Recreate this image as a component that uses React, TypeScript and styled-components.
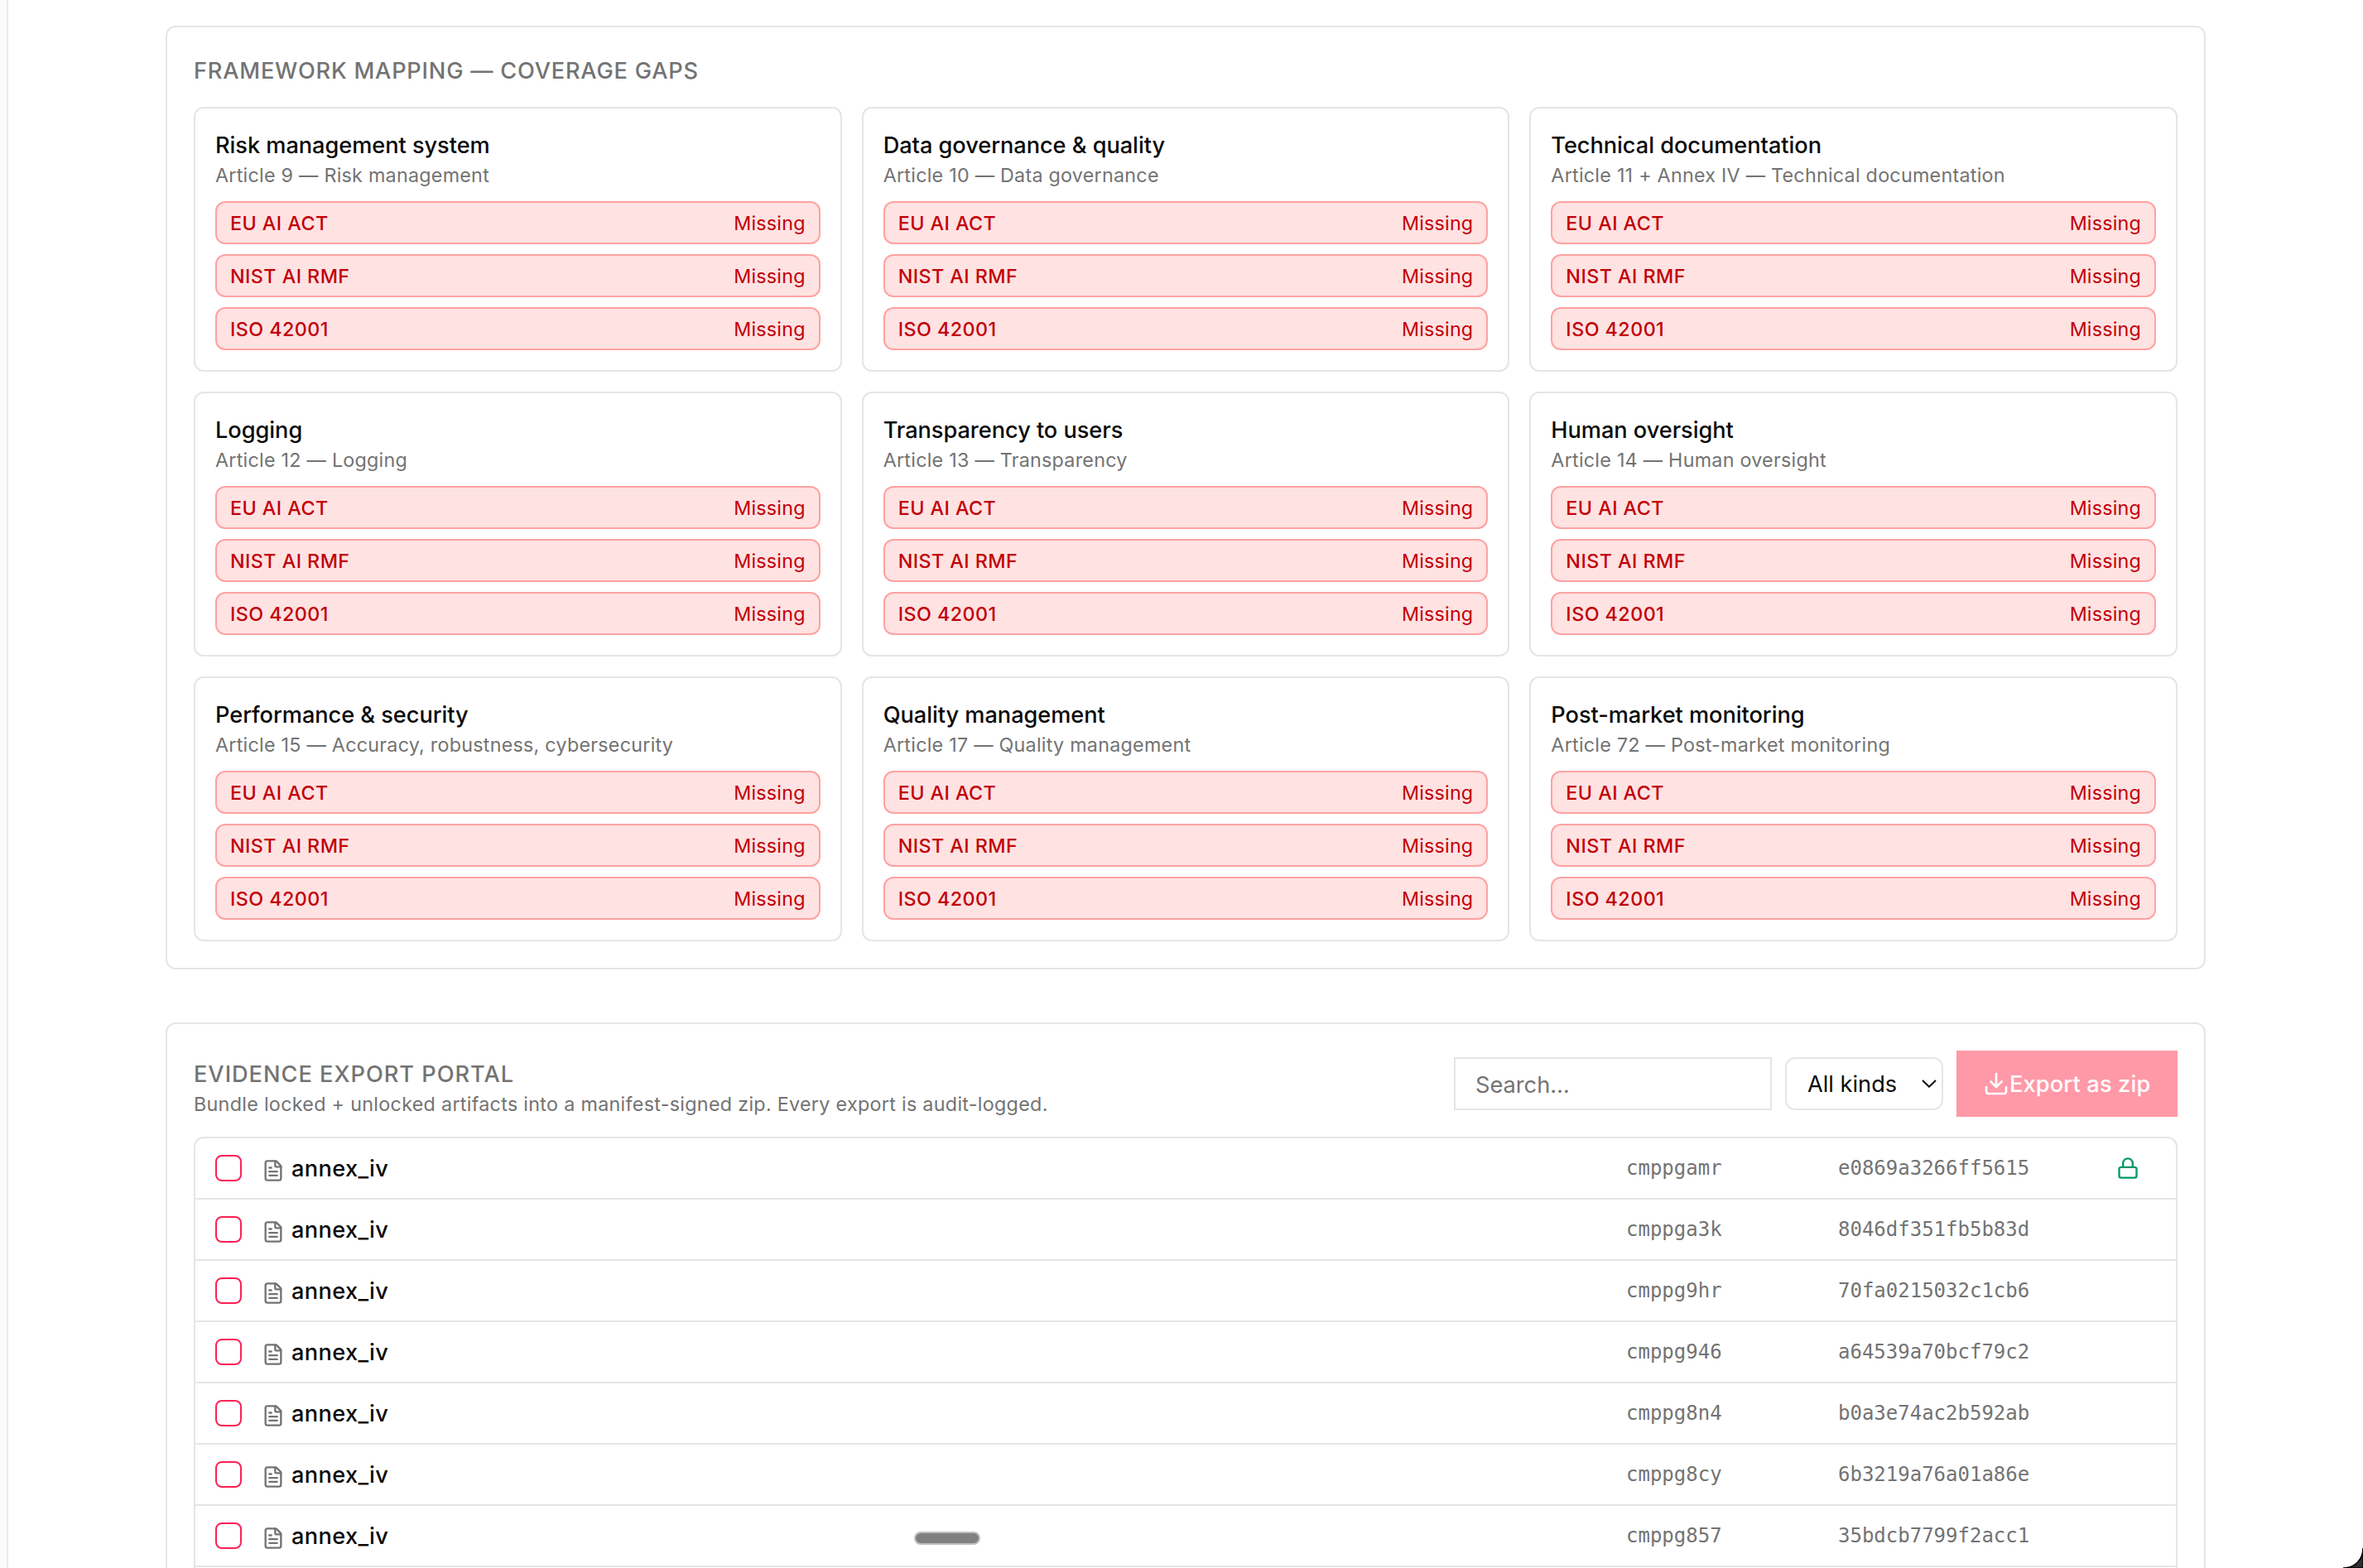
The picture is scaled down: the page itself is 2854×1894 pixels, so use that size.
import { Download, FileText, Lock } from 'lucide-react'
import styled, { createGlobalStyle } from 'styled-components'

interface Control {
  title: string
  article: string
}

interface Artifact {
  kind: string
  system: string
  hash: string
  locked?: boolean
}

const frameworks = ['EU AI ACT', 'NIST AI RMF', 'ISO 42001']

const controls: Control[] = [
  { title: 'Risk management system', article: 'Article 9 — Risk management' },
  { title: 'Data governance & quality', article: 'Article 10 — Data governance' },
  { title: 'Technical documentation', article: 'Article 11 + Annex IV — Technical documentation' },
  { title: 'Logging', article: 'Article 12 — Logging' },
  { title: 'Transparency to users', article: 'Article 13 — Transparency' },
  { title: 'Human oversight', article: 'Article 14 — Human oversight' },
  { title: 'Performance & security', article: 'Article 15 — Accuracy, robustness, cybersecurity' },
  { title: 'Quality management', article: 'Article 17 — Quality management' },
  { title: 'Post-market monitoring', article: 'Article 72 — Post-market monitoring' }
]

const artifacts: Artifact[] = [
  { kind: 'annex_iv', system: 'cmppgamr', hash: 'e0869a3266ff5615', locked: true },
  { kind: 'annex_iv', system: 'cmppga3k', hash: '8046df351fb5b83d' },
  { kind: 'annex_iv', system: 'cmppg9hr', hash: '70fa0215032c1cb6' },
  { kind: 'annex_iv', system: 'cmppg946', hash: 'a64539a70bcf79c2' },
  { kind: 'annex_iv', system: 'cmppg8n4', hash: 'b0a3e74ac2b592ab' },
  { kind: 'annex_iv', system: 'cmppg8cy', hash: '6b3219a76a01a86e' },
  { kind: 'annex_iv', system: 'cmppg857', hash: '35bdcb7799f2acc1' }
]

const App = () => (
  <>
    <GlobalStyle />
    <Page>
      <SidebarEdge />
      <Content>
        <Panel>
          <SectionTitle>Framework mapping — coverage gaps</SectionTitle>
          <ControlGrid>
            {controls.map(({ title, article }) => (
              <ControlCard key={title}>
                <ControlTitle>{title}</ControlTitle>
                <Caption>{article}</Caption>
                <StatusList>
                  {frameworks.map((framework) => (
                    <StatusPill key={framework}>
                      <Framework>{framework}</Framework>
                      <span>Missing</span>
                    </StatusPill>
                  ))}
                </StatusList>
              </ControlCard>
            ))}
          </ControlGrid>
        </Panel>

        <Panel>
          <PortalHeader>
            <div>
              <SectionTitle $flush>Evidence export portal</SectionTitle>
              <PortalCaption>
                Bundle locked + unlocked artifacts into a manifest-signed zip. Every export is audit-logged.
              </PortalCaption>
            </div>
            <Toolbar>
              <SearchInput placeholder="Search…" />
              <KindSelect>
                <span>All kinds</span>
                <Chevron viewBox="0 0 18 10">
                  <path d="M1 1 9 8.7 17 1" />
                </Chevron>
              </KindSelect>
              <ExportButton disabled>
                <Download size={32} />
                <span>Export as zip</span>
              </ExportButton>
            </Toolbar>
          </PortalHeader>
          <ArtifactTable>
            {artifacts.map(({ kind, system, hash, locked }) => (
              <ArtifactRow key={hash}>
                <Checkbox type="checkbox" />
                <Kind>
                  <FileText size={28} />
                  <span>{kind}</span>
                </Kind>
                <Mono>{system}</Mono>
                <Mono>{hash}</Mono>
                {locked && <LockIcon size={28} />}
              </ArtifactRow>
            ))}
          </ArtifactTable>
        </Panel>
      </Content>
      <DragHandle />
      <WindowCorner viewBox="0 0 24 24">
        <path d="M24 0V24H0C14 24 24 14 24 0Z" />
      </WindowCorner>
    </Page>
  </>
)

const GlobalStyle = createGlobalStyle`
  * {
    box-sizing: border-box;
  }

  body {
    margin: 0;
    background: #fff;
    color: #0a0a0a;
    font-family: Inter, 'Liberation Sans', sans-serif;
    font-size: 27.2px;
    line-height: 40px;
  }
`

const Page = styled.div`
  position: relative;
  display: flex;
  height: 1894px;
  overflow: hidden;
`

const SidebarEdge = styled.div`
  flex: 0 0 10px;
  background: #fafafa;
  border-right: 2px solid #ececec;
`

const Content = styled.main`
  flex: none;
  width: 2464px;
  margin: 31px 0 0 190px;
  display: flex;
  flex-direction: column;
  gap: 64px;
`

const Panel = styled.section`
  flex: none;
  padding: 32px;
  border: 2px solid #e5e5e5;
  border-radius: 12px;
`

const SectionTitle = styled.h2<{ $flush?: boolean }>`
  margin: 0 0 ${({ $flush }) => ($flush ? 0 : 24)}px;
  padding-top: 2px;
  color: #737373;
  font-size: 27.2px;
  font-weight: 500;
  line-height: 38px;
  letter-spacing: ${({ $flush }) => ($flush ? 0.98 : 0.79)}px;
  text-transform: uppercase;
`

const ControlGrid = styled.div`
  display: grid;
  grid-template-columns: repeat(3, 1fr);
  gap: 24px;
`

const ControlCard = styled.article`
  padding: 24px;
  border: 2px solid #e5e5e5;
  border-radius: 12px;
`

const ControlTitle = styled.h3`
  margin: 0;
  padding-top: 2px;
  font-size: 27.2px;
  font-weight: 500;
  line-height: 38px;
  letter-spacing: -0.05px;
`

const Caption = styled.p`
  margin: 0;
  padding-top: 2px;
  color: #737373;
  font-size: 23.3px;
  line-height: 30px;
  letter-spacing: 0.25px;
`

const PortalCaption = styled(Caption)`
  letter-spacing: 0.3px;
`

const StatusList = styled.div`
  display: flex;
  flex-direction: column;
  gap: 12px;
  margin-top: 16px;
`

const StatusPill = styled.div`
  display: flex;
  align-items: center;
  justify-content: space-between;
  height: 52px;
  padding: 2px 16px 0;
  border: 2px solid #ffa2a2;
  border-radius: 12px;
  background: #ffe2e2;
  color: #c10007;
  font-size: 23.3px;
  line-height: 32px;
  letter-spacing: 0.2px;
`

const Framework = styled.span`
  font-weight: 500;
  letter-spacing: 0.45px;
`

const PortalHeader = styled.header`
  display: flex;
  align-items: flex-end;
  justify-content: space-between;
  margin-bottom: 24px;
`

const Toolbar = styled.div`
  display: flex;
  align-items: center;
  gap: 16px;
`

const SearchInput = styled.input`
  width: 384px;
  height: 64px;
  padding: 2px 24px 0;
  border: 2px solid #e5e5e5;
  border-radius: 0;
  background: #fff;
  font: inherit;

  &::placeholder {
    color: #737373;
  }
`

const KindSelect = styled.div`
  display: flex;
  align-items: center;
  justify-content: space-between;
  width: 191px;
  height: 64px;
  padding: 0 6px 0 25px;
  border: 2px solid #e5e5e5;
  border-radius: 12px;
  white-space: nowrap;

  span {
    padding-top: 2px;
  }
`

const Chevron = styled.svg`
  width: 18px;
  height: 10px;
  fill: none;
  stroke: #0a0a0a;
  stroke-width: 2;
`

const ExportButton = styled.button`
  display: flex;
  align-items: center;
  width: 267px;
  height: 80px;
  padding: 0 32px;
  border: none;
  background: #ff99a8;
  color: #fff;
  font: inherit;
  font-weight: 500;
  letter-spacing: 0.15px;
  white-space: nowrap;

  svg {
    flex: none;
  }

  span {
    padding-top: 2px;
  }
`

const ArtifactTable = styled.div`
  padding-bottom: 74px;
  border: 2px solid #e5e5e5;
  border-radius: 12px;
`

const ArtifactRow = styled.div`
  display: grid;
  grid-template-columns: 32px 1fr 232px 312px 48px;
  align-items: center;
  gap: 24px;
  height: 74px;
  padding: 0 24px;
  border-bottom: 2px solid #e5e5e5;
`

const Checkbox = styled.input`
  appearance: none;
  width: 32px;
  height: 32px;
  margin: 0;
  border: 2px solid #ff2056;
  border-radius: 8px;
`

const Kind = styled.div`
  display: flex;
  align-items: center;
  gap: 8px;
  font-weight: 500;
  letter-spacing: 0.35px;

  svg {
    margin-top: 6px;
    color: #737373;
  }

  span {
    padding-top: 2px;
  }
`

const Mono = styled.span`
  color: #737373;
  font-family: 'DejaVu Sans Mono', 'Liberation Mono', monospace;
  font-size: 24px;
  line-height: 32px;
`

const LockIcon = styled(Lock)`
  color: #009966;
`

// Floats above the page at the bottom edge
const DragHandle = styled.div`
  position: absolute;
  left: 1104px;
  bottom: 28px;
  width: 80px;
  height: 16px;
  border: 2px solid #bfbfbf;
  border-radius: 8px;
  background: #808080;
`

const WindowCorner = styled.svg`
  position: absolute;
  right: 0;
  bottom: 0;
  width: 24px;
  height: 24px;
  fill: #2f2f31;
  stroke: #000;
  stroke-width: 1.5;
`

export default App
